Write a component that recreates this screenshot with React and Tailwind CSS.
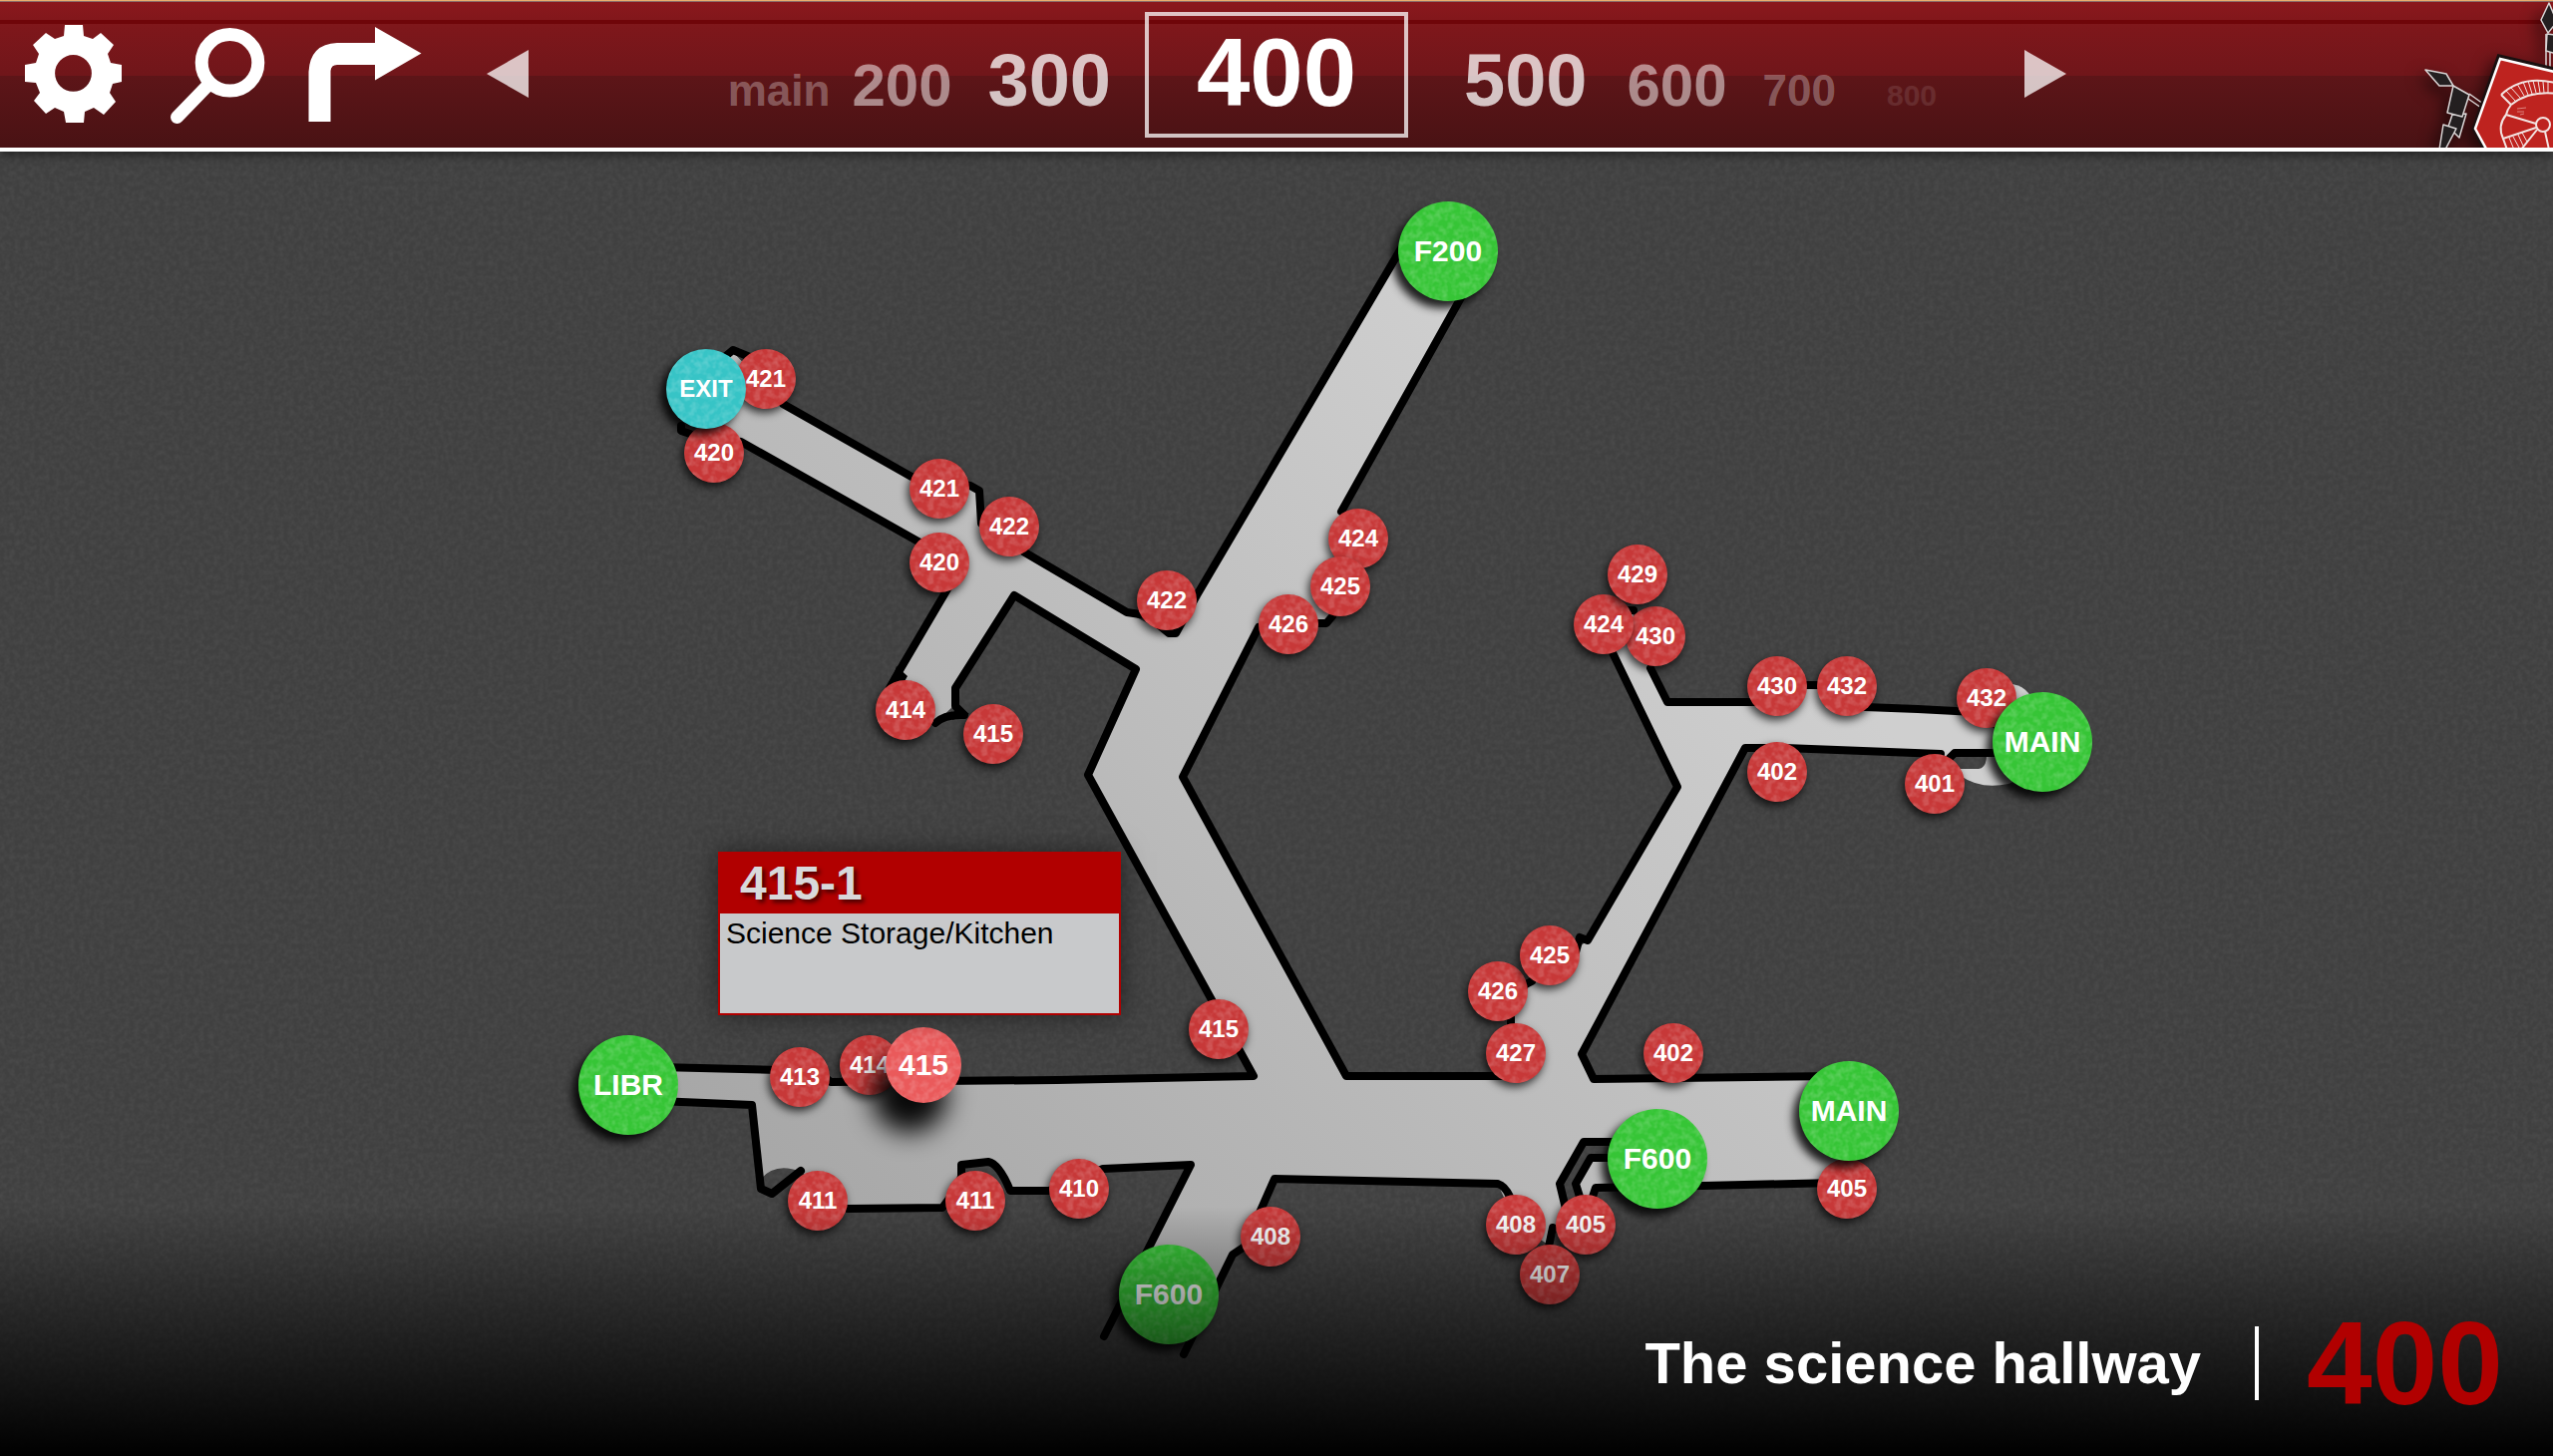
import React from "react";

const hallsBefore = [
  { label: "main", style: "text-[44px] text-white/30 mr-[22px]" },
  { label: "200", style: "text-[60px] text-white/50 mr-9" },
  { label: "300", style: "text-[74px] text-white/75 mr-[34px]" },
];

const hallsAfter = [
  { label: "500", style: "text-[74px] text-white/75 ml-14" },
  { label: "600", style: "text-[60px] text-white/50 ml-10" },
  { label: "700", style: "text-[44px] text-white/30 ml-9" },
  { label: "800", style: "text-[30px] text-white/10 ml-[51px]" },
];

// Drawing coordinates of the map's top left corner.
const ORIGIN = { x: 440, y: 152 };

const nodes = [
  ["room", "421", 768, 380],
  ["room", "420", 716, 454],
  ["exit", "EXIT", 708, 390],
  ["room", "421", 942, 490],
  ["room", "422", 1012, 528],
  ["room", "420", 942, 564],
  ["room", "414", 908, 712],
  ["room", "415", 996, 736],
  ["room", "422", 1170, 602],
  ["hall", "F200", 1452, 252],
  ["room", "424", 1362, 540],
  ["room", "425", 1344, 588],
  ["room", "426", 1292, 626],
  ["room", "430", 1660, 638],
  ["room", "424", 1608, 626],
  ["room", "429", 1642, 576],
  ["room", "430", 1782, 688],
  ["room", "432", 1852, 688],
  ["room", "432", 1992, 700],
  ["room", "402", 1782, 774],
  ["room", "401", 1940, 786],
  ["hall", "MAIN", 2048, 744],
  ["hall", "LIBR", 630, 1088],
  ["room", "413", 802, 1080],
  ["room", "414", 872, 1068],
  ["active", "415", 926, 1068],
  ["room", "411", 820, 1204],
  ["room", "411", 978, 1204],
  ["room", "410", 1082, 1192],
  ["room", "415", 1222, 1032],
  ["room", "426", 1502, 994],
  ["room", "425", 1554, 958],
  ["room", "427", 1520, 1056],
  ["room", "402", 1678, 1056],
  ["room", "405", 1852, 1192],
  ["hall", "MAIN", 1854, 1114],
  ["room", "408", 1520, 1228],
  ["room", "405", 1590, 1228],
  ["hall", "F600", 1662, 1162],
  ["room", "407", 1554, 1278],
  ["room", "408", 1274, 1240],
  ["hall", "F600", 1172, 1298],
];

const nodeStyles = {
  room: "size-[60px] text-2xl bg-[#c73838] shadow-[-2px_4px_8px_rgba(0,0,0,0.75)]",
  exit: "size-[80px] text-2xl bg-[#37c4c6] shadow-[-6px_6px_8px_rgba(0,0,0,0.85)]",
  hall: "size-[100px] text-[30px] bg-[#36c536] shadow-[-6px_7px_9px_rgba(0,0,0,0.85)]",
  active: "size-[76px] text-[30px] bg-[#ea5a5b] shadow-[-14px_30px_26px_rgba(0,0,0,0.95)]",
};

function Filters() {
  return (
    <svg className="absolute size-0" aria-hidden="true">
      <filter id="grain" x="0" y="0" width="100%" height="100%" colorInterpolationFilters="sRGB">
        <feTurbulence type="fractalNoise" baseFrequency="0.2" numOctaves="2" seed="4" />
        <feColorMatrix values="0 0 0 0 1  0 0 0 0 1  0 0 0 0 1  0.09 0 0 0 -0.03" />
      </filter>
      <filter id="speck" x="0" y="0" width="100%" height="100%" colorInterpolationFilters="sRGB">
        <feTurbulence type="fractalNoise" baseFrequency="0.16" numOctaves="2" seed="9" />
        <feColorMatrix values="0 0 0 0 1  0 0 0 0 1  0 0 0 0 1  0.4 0 0 0 -0.15" />
      </filter>
    </svg>
  );
}

function Logo() {
  return (
    <svg
      viewBox="0 0 180 148"
      className="h-[148px] w-[180px] drop-shadow-[-5px_6px_8px_rgba(0,0,0,0.6)]"
      role="img"
      aria-label="School crest"
    >
      <g fill="#231f20" stroke="#d9d5d5" strokeWidth="1.5" strokeLinejoin="round">
        <path d="M52 70 L73 74 L80 86 L66 86 Z" />
        <path d="M96 94 L110 104 M95 99 L108 108" fill="none" />
        <path d="M79 115 L93 114 L86 138 L75 127 Z" />
        <path d="M80 86 L96 95 L89 117 L74 113 Z" />
        <path d="M70 125 L83 129 L72 150 L66 150 Z" />
        <path d="M176 3 L168 20 L175 33 L184 22 Z" />
        <path d="M173 34 V68 M177 34 V68" fill="none" />
        <path d="M174 34 L190 36 L190 56 L173 51 Z" />
      </g>
      <path d="M126 57 L190 72 L190 160 L118 160 L101 129 Z" fill="#be231f" stroke="#1a1010" strokeWidth="5" />
      <path d="M127 59 L190 74 L190 160 L119 160 L102 129 Z" fill="#be231f" stroke="#fff" strokeWidth="2.5" />
      <g fill="none" stroke="#f3e4e2" strokeWidth="2">
        <path d="M128 95 Q150 74 186 84 M128 95 L138 105 M138 105 Q156 90 186 94" />
        <path
          strokeWidth="1"
          d="M133 91 L142 101 M138 88 L147 98 M144 84 L151 96 M150 82 L155 95 M155 81 L159 94 M160 81 L163 93 M165 81 L167 93 M170 82 L171 93 M175 82 L175 93"
        />
        <path d="M138 105 Q134 110 133 115 L163 124 M133 115 Q124 126 130 139 L163 128" />
        <circle cx="170" cy="125" r="7" />
        <path d="M130 139 L134 150 M164 130 L148 150 M172 132 L176 150" />
        <path strokeWidth="1" d="M136 138 L141 150 M140 137 L146 148 M145 135 L150 146 M149 133 L154 142" />
        <path stroke="#dd8580" strokeWidth="1" d="M144 109 L153 108 M144 112 L151 112 M147 115 L151 114" />
      </g>
    </svg>
  );
}

function Header() {
  return (
    <header className="relative z-10 grid h-[152px] grid-cols-[1fr_auto_1fr] border-b-4 border-white bg-[linear-gradient(to_bottom,#e8ae70_0px,#e8ae70_1px,#8c6c68_1px,#8c6c68_2px,#8b181d_2px,#82171b_20px,#6f0509_20px,#6f0509_24px,#7f171b_24px,#70161a_76px,#5d1518_76px,#491214_148px)] shadow-[0_3px_10px_rgba(0,0,0,0.5)]">
      <div className="flex items-start pt-[25px] pl-6 text-white">
        <button aria-label="Settings">
          <svg viewBox="24 25 100 100" className="size-[100px]" fill="currentColor">
            <path
              fillRule="evenodd"
              d="M65 25H83L84 36L93 39L101 33L114 45L108 54L111 63L122 65V82L113 84L110 93L116 102L104 115L94 108L85 112L84 123H66L64 112L55 108L46 114L34 101L40 93L36 83L25 82V65L36 63L39 54L33 45L46 33L55 39L64 36ZM73.500 55a18.400 18.400 0 1 0 0 36.800a18.400 18.400 0 1 0 0 -36.800Z"
            />
          </svg>
        </button>
        <button aria-label="Search" className="ml-11">
          <svg viewBox="168 25 98 100" className="h-[100px] w-[98px]" fill="none" stroke="currentColor" strokeWidth="13">
            <circle cx="230.500" cy="62.800" r="28.300" />
            <path d="M208 86 L177.500 117.500" strokeLinecap="round" />
          </svg>
        </button>
        <button aria-label="Directions" className="ml-[43px]">
          <svg viewBox="309 25 114 100" className="h-[100px] w-[114px]" fill="currentColor">
            <path d="M309.500 122V72Q311 44 338 43H376V27L422.500 53.500L376 80.500V65H338Q332 65 331.500 71V122Z" />
          </svg>
        </button>
      </div>

      <nav className="grid w-[1584px] grid-cols-[42px_1fr_264px_1fr_42px] font-bold text-white" aria-label="Hallways">
        <button aria-label="Previous hallway" className="self-center text-white/75">
          <svg viewBox="0 0 42 48" className="h-12 w-[42px]" fill="currentColor">
            <path d="M0 24L42 0V48Z" />
          </svg>
        </button>
        <div className="flex items-baseline justify-end self-start pt-11 leading-none">
          {hallsBefore.map((h) => (
            <button key={h.label} className={`leading-none ${h.style}`}>
              {h.label}
            </button>
          ))}
        </div>
        <button className="mt-3 h-[126px] border-4 border-white/75 pb-1 text-[96px] leading-none" aria-current="true">
          400
        </button>
        <div className="flex items-baseline self-start pt-11 leading-none">
          {hallsAfter.map((h) => (
            <button key={h.label} className={`leading-none ${h.style}`}>
              {h.label}
            </button>
          ))}
        </div>
        <button aria-label="Next hallway" className="self-center text-white/75">
          <svg viewBox="0 0 42 48" className="h-12 w-[42px]" fill="currentColor">
            <path d="M42 24L0 0V48Z" />
          </svg>
        </button>
      </nav>

      <div className="flex justify-end overflow-hidden">
        <Logo />
      </div>
    </header>
  );
}

function Floor() {
  return (
    <svg viewBox="440 152 1680 1230" className="absolute inset-0 size-full" aria-hidden="true">
      <defs>
        <linearGradient id="floor" gradientUnits="userSpaceOnUse" x1="700" y1="1200" x2="1530" y2="370">
          <stop offset="0" stopColor="#a5a5a5" />
          <stop offset="1" stopColor="#cfcfcf" />
        </linearGradient>
      </defs>
      <g fill="url(#floor)">
        <path d="M734 352L785 405L914 478L973 487L982 491L983 520L1026 553L1130 614L1164 632L1178 635L1200 597L1403 253L1475 260L1463 302L1345 513L1335 619L1322 625L1262 629L1186 779L1295 980L1350 1079H1515V1023L1535 985L1583 950L1592 943L1682 789L1616 657L1600 626L1636 613L1672 704L1754 704L1812 687H1823L1877 710L1963 713L2030 745V756H1959L1946 775L1946 756L1877 753L1750 750L1586 1057L1598 1082L1854 1079V1187L1707 1189L1600 1191L1590 1228L1582 1198L1580 1187L1595 1161H1650V1145H1588L1564 1187L1568 1207L1556 1250L1520 1228L1502 1187L1278 1182L1248 1250L1236 1258L1215 1300L1172 1310L1155 1248L1195 1168L1106 1172L1052 1194H1013L1005 1176L991 1165L965 1168L945 1211L850 1212L803 1175Q778 1165 763 1182L754 1109L630 1103V1070L773 1072L833 1084L1060 1083L1257 1079L1091 777L1139 671L1017 596L957 690V707L938 725L904 712V675L964 567L919 542L700 418Z" />
        <path d="M1966 771H1984Q1992 770 1992 757L2050 740V770L2014 786Q1986 792 1966 778Z" />
        <path d="M2018 686Q2030 688 2036 698L2010 715Z" />
      </g>
      <g fill="none" stroke="#000" strokeWidth="8" strokeLinejoin="round" strokeLinecap="round">
        <path d="M724 360L735 351L752 358L785 405L914 478L973 487L982 492L984 525L1026 553L1130 614L1150 617L1172 635H1179L1200 597L1408 244" />
        <path d="M683 427V432L692 435M743 443L919 542L964 567L901 674L892 690" />
        <path d="M938 725Q947 716 967 717L958 708V690L1017 597L1139 671L1091 777L1257 1079L1060 1083L833 1085L820 1074L660 1070" />
        <path d="M660 1104L754 1108L763 1192L774 1197L803 1174M850 1212L945 1211L964 1185V1168L991 1165Q1002 1167 1013 1194H1052L1106 1172L1194 1168L1107 1340" />
        <path d="M1187 1358L1236 1258L1248 1250L1278 1182L1502 1187Q1509 1189 1514 1200M1553 1250L1557 1231" />
        <path d="M1570 1212L1564 1187L1588 1145H1625M1584 1200L1580 1187L1595 1161H1625M1597 1200L1600 1191L1707 1189L1840 1186" />
        <path d="M1840 1079L1598 1082L1586 1057L1750 750L1790 750L1946 756M1955 760L1960 755H2010" />
        <path d="M1608 636L1682 789L1592 943L1584 940L1580 955M1536 984L1520 992M1515 1020V1079H1350L1186 779L1262 629M1310 625H1330L1336 618M1345 513L1463 302L1480 270" />
        <path d="M1625 612H1638M1655 670L1672 704H1770M1808 687H1824M1870 709L1923 711L1980 714" />
      </g>
      <path d="M899 668L910 678L902 692L890 696Z M958 706L972 716L955 722Z" fill="#000" />
    </svg>
  );
}

function Node({ kind, label, x, y }) {
  return (
    <button
      className={`absolute flex -translate-x-1/2 -translate-y-1/2 items-center justify-center rounded-full font-bold leading-none text-white ${nodeStyles[kind]}`}
      style={{ left: x - ORIGIN.x, top: y - ORIGIN.y }}
    >
      <svg className="absolute inset-0 size-full rounded-full" aria-hidden="true">
        <rect width="100%" height="100%" filter="url(#speck)" />
      </svg>
      <span className="relative">{label}</span>
    </button>
  );
}

function RoomCard() {
  return (
    <section className="absolute top-[702px] left-[280px] w-[404px] border-2 border-[#b10000] bg-[#c8c9cb] shadow-[0_0_24px_rgba(0,0,0,0.5)]">
      <h2 className="h-[60px] bg-[#b10000] pl-5 text-[48px] leading-[60px] font-bold text-[#d8d9db] text-shadow-[3px_3px_4px_rgba(0,0,0,0.6)]">
        415-1
      </h2>
      <p className="h-[100px] px-[6px] text-[30px] leading-10 text-black">Science Storage/Kitchen</p>
    </section>
  );
}

export default function App() {
  return (
    <div className="flex min-h-screen flex-col bg-[#404040] font-['Liberation_Sans',Arial,sans-serif]">
      <Filters />
      <Header />
      <main className="relative grid flex-1 overflow-hidden">
        <svg className="absolute inset-0 size-full" aria-hidden="true">
          <rect width="100%" height="100%" filter="url(#grain)" />
        </svg>
        <div className="relative col-start-1 row-start-1 h-[1230px] w-[1680px] justify-self-center">
          <Floor />
          {nodes.map(([kind, label, x, y]) => (
            <Node key={`${x}-${y}`} kind={kind} label={label} x={x} y={y} />
          ))}
          <RoomCard />
        </div>
        <footer className="pointer-events-none relative col-start-1 row-start-1 flex h-[250px] items-end justify-end self-end bg-linear-to-b from-black/0 to-black pr-[50px] pb-[34px] font-bold">
          <div className="flex items-center">
            <h1 className="text-[58px] leading-none text-white">The science hallway</h1>
            <div className="ml-[54px] h-[74px] w-1 bg-white" />
            <span className="ml-12 text-[118px] leading-none text-[#b10000]">400</span>
          </div>
        </footer>
      </main>
    </div>
  );
}
